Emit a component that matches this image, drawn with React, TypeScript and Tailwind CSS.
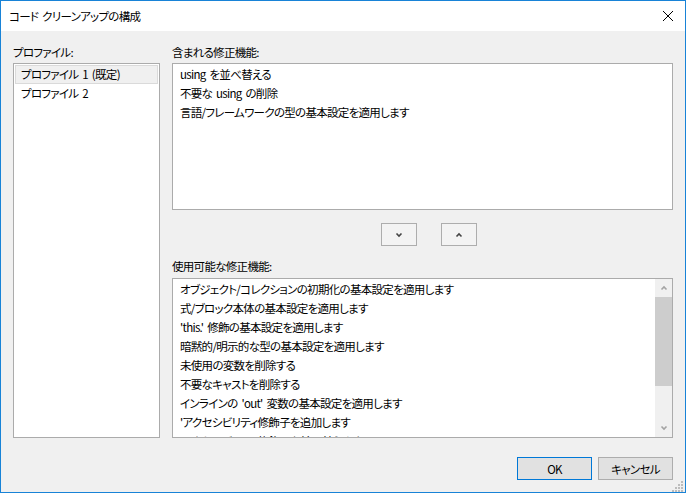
import React from "react";

const font = "[font-family:'Noto_Sans_CJK_JP','Noto_Sans',sans-serif] [font-feature-settings:'palt'] [word-spacing:2px]";

function Chevron({ up, color = "#444", size = 8 }: { up?: boolean; color?: string; size?: number }) {
  return (
    <svg width={size} height={size} viewBox="0 0 8 8">
      <path
        d={up ? "M1.5 5.5 L4 3 L6.5 5.5" : "M1.5 2.5 L4 5 L6.5 2.5"}
        fill="none"
        stroke={color}
        strokeWidth={1.6}
      />
    </svg>
  );
}

export default function App() {
  const included = ["using を並べ替える", "不要な using の削除", "言語/フレームワークの型の基本設定を適用します"];
  const available = [
    "オブジェクト/コレクションの初期化の基本設定を適用します",
    "式/ブロック本体の基本設定を適用します",
    "'this.' 修飾の基本設定を適用します",
    "暗黙的/明示的な型の基本設定を適用します",
    "未使用の変数を削除する",
    "不要なキャストを削除する",
    "インラインの 'out' 変数の基本設定を適用します",
    "'アクセシビリティ修飾子を追加します",
    "'アクセシビリティ修飾子を並べ替えます",
  ];
  return (
    <div className={`w-[686px] h-[493px] border border-[#1883d7] bg-[#f0f0f0] flex flex-col text-[11.5px] tracking-[-0.7px] text-[#000] ${font}`}>
      <div className="h-[30px] bg-white flex items-center justify-between pl-[8px] pr-[10px]">
        <span className="leading-[16px]">コード クリーンアップの構成</span>
        <svg width="12" height="12" viewBox="0 0 12 12" className="mr-[1px]">
          <path d="M1 1 L11 11 M11 1 L1 11" stroke="#000" strokeWidth="1" />
        </svg>
      </div>
      <div className="flex-1 flex flex-col px-[12px] pt-[13px]">
        <div className="flex gap-[12px]">
          <div className="w-[147px] flex flex-col">
            <div className="h-[16px] leading-[16px] mb-[3px]">プロファイル:</div>
            <div className="h-[375px] bg-white border border-[#ababab] p-[1px]">
              <div className="h-[19px] leading-[19px] pl-[5px] bg-[#f0f0f0] border border-[#dadada] flex items-center">
                プロファイル 1 (既定)
              </div>
              <div className="h-[19px] leading-[19px] pl-[6px]">プロファイル 2</div>
            </div>
          </div>
          <div className="w-[501px] flex flex-col">
            <div className="h-[16px] leading-[16px] mb-[3px]">含まれる修正機能:</div>
            <div className="h-[147px] bg-white border border-[#ababab] pt-[1px] pl-[7px]">
              {included.map((t) => (
                <div key={t} className="h-[19px] leading-[19px] whitespace-nowrap">{t}</div>
              ))}
            </div>
            <div className="flex gap-[24px] pl-[209px] mt-[13px]">
              <div className="w-[36px] h-[23px] border border-[#adadad] bg-[#f3f3f3] flex items-center justify-center">
                <Chevron />
              </div>
              <div className="w-[36px] h-[23px] border border-[#adadad] bg-[#f3f3f3] flex items-center justify-center">
                <Chevron up />
              </div>
            </div>
            <div className="h-[16px] leading-[16px] mt-[12px] mb-[4px]">使用可能な修正機能:</div>
            <div className="h-[160px] bg-white border border-[#ababab] flex overflow-hidden">
              <div className="flex-1 pt-[1px] pl-[7px] overflow-hidden">
                {available.map((t) => (
                  <div key={t} className="h-[19px] leading-[19px] whitespace-nowrap">{t}</div>
                ))}
              </div>
              <div className="w-[17px] bg-[#f0f0f0] flex flex-col">
                <div className="h-[18px] flex items-center justify-center">
                  <Chevron up color="#a3a3a3" />
                </div>
                <div className="h-[89px] bg-[#cdcdcd]" />
                <div className="flex-1" />
                <div className="h-[18px] flex items-center justify-center">
                  <Chevron color="#a3a3a3" />
                </div>
              </div>
            </div>
          </div>
        </div>
        <div className="flex justify-end gap-[6px] mt-[19px] pr-[0px]">
          <div className="w-[75px] h-[23px] border border-[#0078d7] bg-[#e1e1e1] flex items-center justify-center leading-[16px]">
            OK
          </div>
          <div className="w-[75px] h-[23px] border border-[#adadad] bg-[#e1e1e1] flex items-center justify-center leading-[16px]">
            キャンセル
          </div>
        </div>
        <div className="flex justify-end -mr-[11px] mt-[1px]">
          <svg width="12" height="11" viewBox="0 0 12 11">
            {[
              [9, 0], [9, 3], [6, 3], [9, 6], [6, 6], [3, 6], [9, 9], [6, 9], [3, 9], [0, 9],
            ].map(([x, y], i) => (
              <rect key={i} x={x} y={y} width="2" height="2" fill="#bcbcbc" />
            ))}
          </svg>
        </div>
      </div>
    </div>
  );
}
